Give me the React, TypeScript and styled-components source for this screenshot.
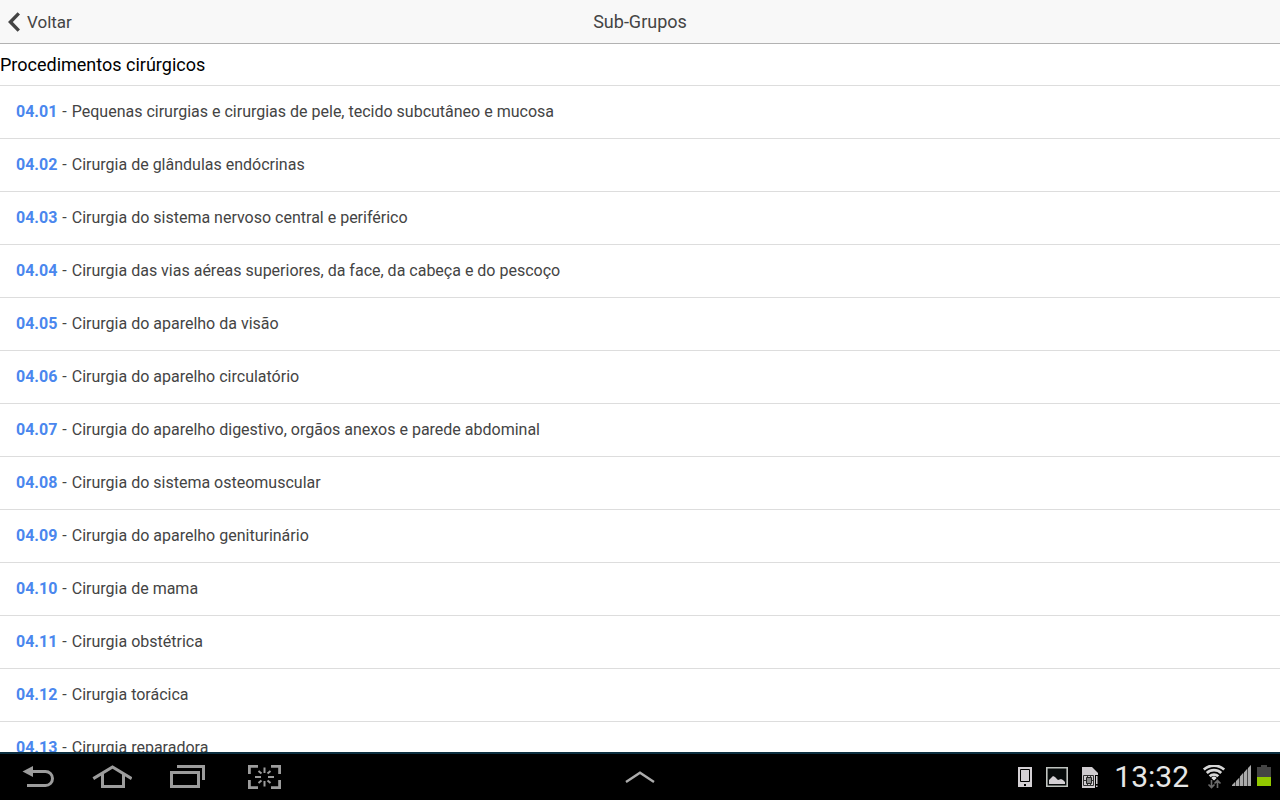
import React from "react";
import styled, { createGlobalStyle } from "styled-components";

const GlobalStyle = createGlobalStyle`
  * { box-sizing: border-box; }
  body { margin: 0; background: #fff; font-family: Roboto, "Noto Sans", sans-serif; }
`;

const Screen = styled.div`
  display: flex;
  flex-direction: column;
  height: 100vh;
  overflow: hidden;
`;

const Header = styled.header`
  display: grid;
  grid-template-columns: 1fr auto 1fr;
  align-items: center;
  flex: none;
  height: 44px;
  padding: 0 8px;
  background: #f8f8f8;
  border-bottom: 1px solid #b2b2b2;
  color: #444;
`;

const BackButton = styled.button`
  display: flex;
  align-items: center;
  justify-self: start;
  gap: 7px;
  padding: 0;
  border: 0;
  background: none;
  color: inherit;
  font: 400 17px/42px Roboto, sans-serif;
  cursor: pointer;
`;

const Title = styled.h1`
  margin: 0;
  font-size: 18px;
  font-weight: 400;
  line-height: 42px;
`;

const Content = styled.main`
  flex: 1;
  min-height: 0;
  overflow: hidden;
`;

const GroupName = styled.h2`
  margin: 0;
  font-size: 18px;
  font-weight: 400;
  line-height: 41px;
  color: #000;
`;

const List = styled.ul`
  margin: 0;
  padding: 0;
  list-style: none;
`;

const Item = styled.li`
  border-top: 1px solid #ddd;
`;

const ItemLink = styled.a`
  display: flex;
  gap: 5px;
  padding: 0 16px;
  font-size: 16px;
  line-height: 52px;
  color: #444;
  text-decoration: none;
`;

const Code = styled.b`
  font-weight: 700;
  color: #4a87ee;
`;

const SystemBar = styled.footer`
  display: grid;
  grid-template-columns: 1fr auto 1fr;
  align-items: center;
  flex: none;
  height: 48px;
  padding: 0 9px;
  background: #000;
  border-top: 2px solid #0c2f40;
`;

const NavKeys = styled.nav`
  display: flex;
  gap: 38px;
  padding-left: 11px;
`;

const KeyButton = styled.button`
  display: block;
  padding: 0;
  border: 0;
  background: none;
  color: #9c9c9c;
  cursor: pointer;
  svg { display: block; }
`;

const Status = styled.div`
  display: flex;
  align-items: center;
  justify-self: end;
  svg { display: block; }
`;

const Notices = styled.div`
  display: flex;
  gap: 14px;
  margin-right: 16px;
`;

const Clock = styled.time`
  margin-right: 14px;
  font-size: 30px;
  line-height: 46px;
  color: #e6e6e6;
`;

const Signals = styled.div`
  display: flex;
  gap: 6px;
`;

const groups: [string, string][] = [
  ["04.01", "Pequenas cirurgias e cirurgias de pele, tecido subcutâneo e mucosa"],
  ["04.02", "Cirurgia de glândulas endócrinas"],
  ["04.03", "Cirurgia do sistema nervoso central e periférico"],
  ["04.04", "Cirurgia das vias aéreas superiores, da face, da cabeça e do pescoço"],
  ["04.05", "Cirurgia do aparelho da visão"],
  ["04.06", "Cirurgia do aparelho circulatório"],
  ["04.07", "Cirurgia do aparelho digestivo, orgãos anexos e parede abdominal"],
  ["04.08", "Cirurgia do sistema osteomuscular"],
  ["04.09", "Cirurgia do aparelho geniturinário"],
  ["04.10", "Cirurgia de mama"],
  ["04.11", "Cirurgia obstétrica"],
  ["04.12", "Cirurgia torácica"],
  ["04.13", "Cirurgia reparadora"],
];

const ChevronLeft = () => (
  <svg width="12" height="20" viewBox="0 0 12 20" fill="none" stroke="currentColor" strokeWidth="3.4" aria-hidden="true">
    <path d="M10.8 1.4 2.4 10l8.4 8.6" />
  </svg>
);

const BackIcon = () => (
  <svg width="34" height="26" viewBox="0 1 34 26" fill="none" aria-hidden="true">
    <path d="M12 8.5H25.5a7 7 0 0 1 0 14H7" stroke="currentColor" strokeWidth="3" />
    <path d="M2.500 8.500 13 3v11z" fill="currentColor" />
  </svg>
);

const HomeIcon = () => (
  <svg width="40" height="26" viewBox="0 1 40 26" fill="none" stroke="currentColor" strokeWidth="3" aria-hidden="true">
    <path d="M1.300 15.600 20.500 4l19.200 11.600" />
    <path d="M10.500 11v12.500h21V11" />
  </svg>
);

const RecentIcon = () => (
  <svg width="40" height="26" viewBox="0 1 40 26" fill="none" stroke="currentColor" strokeWidth="3" aria-hidden="true">
    <path d="M1.500 9.500h27v14h-27z" />
    <path d="M7 3.500h26.500V17" />
  </svg>
);

const CaptureIcon = () => (
  <svg width="34" height="26" viewBox="0 1 34 26" fill="none" stroke="currentColor" aria-hidden="true">
    <path strokeWidth="2.800" d="M1.400 11V3.400H10M23 3.400h8.600V11M31.600 17v7.600H23M10 24.600H1.400V17" />
    <path strokeWidth="2" d="M16.500 4.500v5.500M16.500 18v5.500M7 14h6M20 14h6M10.500 8l3 2.500M22.500 8l-3 2.500M10.500 20l3-2.500M22.500 20l-3-2.500" />
  </svg>
);

const UpIcon = () => (
  <svg width="30" height="12" viewBox="0 0 30 12" fill="none" stroke="#acacac" strokeWidth="2.400" aria-hidden="true">
    <path d="M1 11 15 1.800 29 11" />
  </svg>
);

const PhoneIcon = () => (
  <svg width="14" height="20" viewBox="0 0 14 20" aria-hidden="true">
    <path fill="#d4d0d4" d="M0 0h14v20H0z" />
    <path fill="none" stroke="#000" d="M2.500 2.500h9v12h-9z" />
    <path fill="#000" d="M6 17h2v2H6z" />
  </svg>
);

const PictureIcon = () => (
  <svg width="22" height="20" viewBox="0 0 22 20" aria-hidden="true">
    <path fill="#070b0b" stroke="#c0c4c0" strokeWidth="1.600" d="M.8.8h20.400v18.400H.8z" />
    <path fill="#d4d0d4" d="M3 17v-4l4-4 2 1 3 3 3-1 2 1 2 2v2z" />
  </svg>
);

const SimIcon = () => (
  <svg width="16" height="21" viewBox="0 0 16 21" aria-hidden="true">
    <path fill="#d0ccd0" d="M0 0h10l6 6v15H0z" />
    <path fill="none" stroke="#333" d="M1.500 8.500h10v10h-10z" />
    <path fill="#888" stroke="#222" d="M4.500 10.500h5v6h-5z" />
    <path fill="none" stroke="#333" d="M5.500 8v2M8.500 8v2M5.500 17v2M8.500 17v2M2 13.500h2M10 13.500h2" />
    <path fill="#000" d="M13 8h3v13h-3z" />
    <path fill="#d0ccd0" d="M14 9h1.500v8H14zM14 18.500h1.500V20H14z" />
  </svg>
);

const WifiIcon = () => (
  <svg width="22" height="24" viewBox="0 1 22 24" fill="none" aria-hidden="true">
    <g stroke="#d6d6d6" strokeWidth="2.700">
      <path d="M.8 5.600a15 15 0 0 1 20.400 0" />
      <path d="M3.800 9a10.500 10.500 0 0 1 14.400 0" />
      <path d="M6.700 12.300a6.200 6.200 0 0 1 8.600 0" />
    </g>
    <path fill="#e2e2e2" d="M8.300 13.900a3.800 3.800 0 0 1 5.400 0L11 16.500z" />
    <path stroke="#6c6c6c" strokeWidth="1.600" d="M8.500 16v7.500M5.500 20.500l3 3 3-3M14.500 24v-7.500M11.500 19.500l3-3 3 3" />
  </svg>
);

const SignalIcon = () => (
  <svg width="20" height="24" viewBox="-1 2 20 24" aria-hidden="true">
    <path fill="#444" d="M0 23 19 2v21z" />
    <path fill="#aaa" d="M0 23v-1l3-3v4zM4 18l3-3v8H4zM8 13.500l3-3.500v13H8zM12 9.500l3-3.500v17h-3zM16 5l3-3v21h-3z" />
  </svg>
);

const BatteryIcon = () => (
  <svg width="14" height="24" viewBox="0 2 14 24" aria-hidden="true">
    <path fill="#444" d="M4 2h6v2h4v10H0V4h4z" />
    <path fill="#92c800" d="M0 14h14v9H0z" />
  </svg>
);

export default function App() {
  return (
    <Screen>
      <GlobalStyle />
      <Header>
        <BackButton type="button">
          <ChevronLeft />
          Voltar
        </BackButton>
        <Title>Sub-Grupos</Title>
      </Header>
      <Content>
        <GroupName>Procedimentos cirúrgicos</GroupName>
        <List>
          {groups.map(([code, name]) => (
            <Item key={code}>
              <ItemLink href={`#${code}`}>
                <Code>{code}</Code>
                <span>-</span>
                <span>{name}</span>
              </ItemLink>
            </Item>
          ))}
        </List>
      </Content>
      <SystemBar>
        <NavKeys aria-label="Sistema">
          <KeyButton type="button" aria-label="Voltar"><BackIcon /></KeyButton>
          <KeyButton type="button" aria-label="Início"><HomeIcon /></KeyButton>
          <KeyButton type="button" aria-label="Recentes"><RecentIcon /></KeyButton>
          <KeyButton type="button" aria-label="Capturar tela"><CaptureIcon /></KeyButton>
        </NavKeys>
        <KeyButton type="button" aria-label="Abrir bandeja"><UpIcon /></KeyButton>
        <Status>
          <Notices>
            <PhoneIcon />
            <PictureIcon />
            <SimIcon />
          </Notices>
          <Clock>13:32</Clock>
          <Signals>
            <WifiIcon />
            <SignalIcon />
            <BatteryIcon />
          </Signals>
        </Status>
      </SystemBar>
    </Screen>
  );
}
